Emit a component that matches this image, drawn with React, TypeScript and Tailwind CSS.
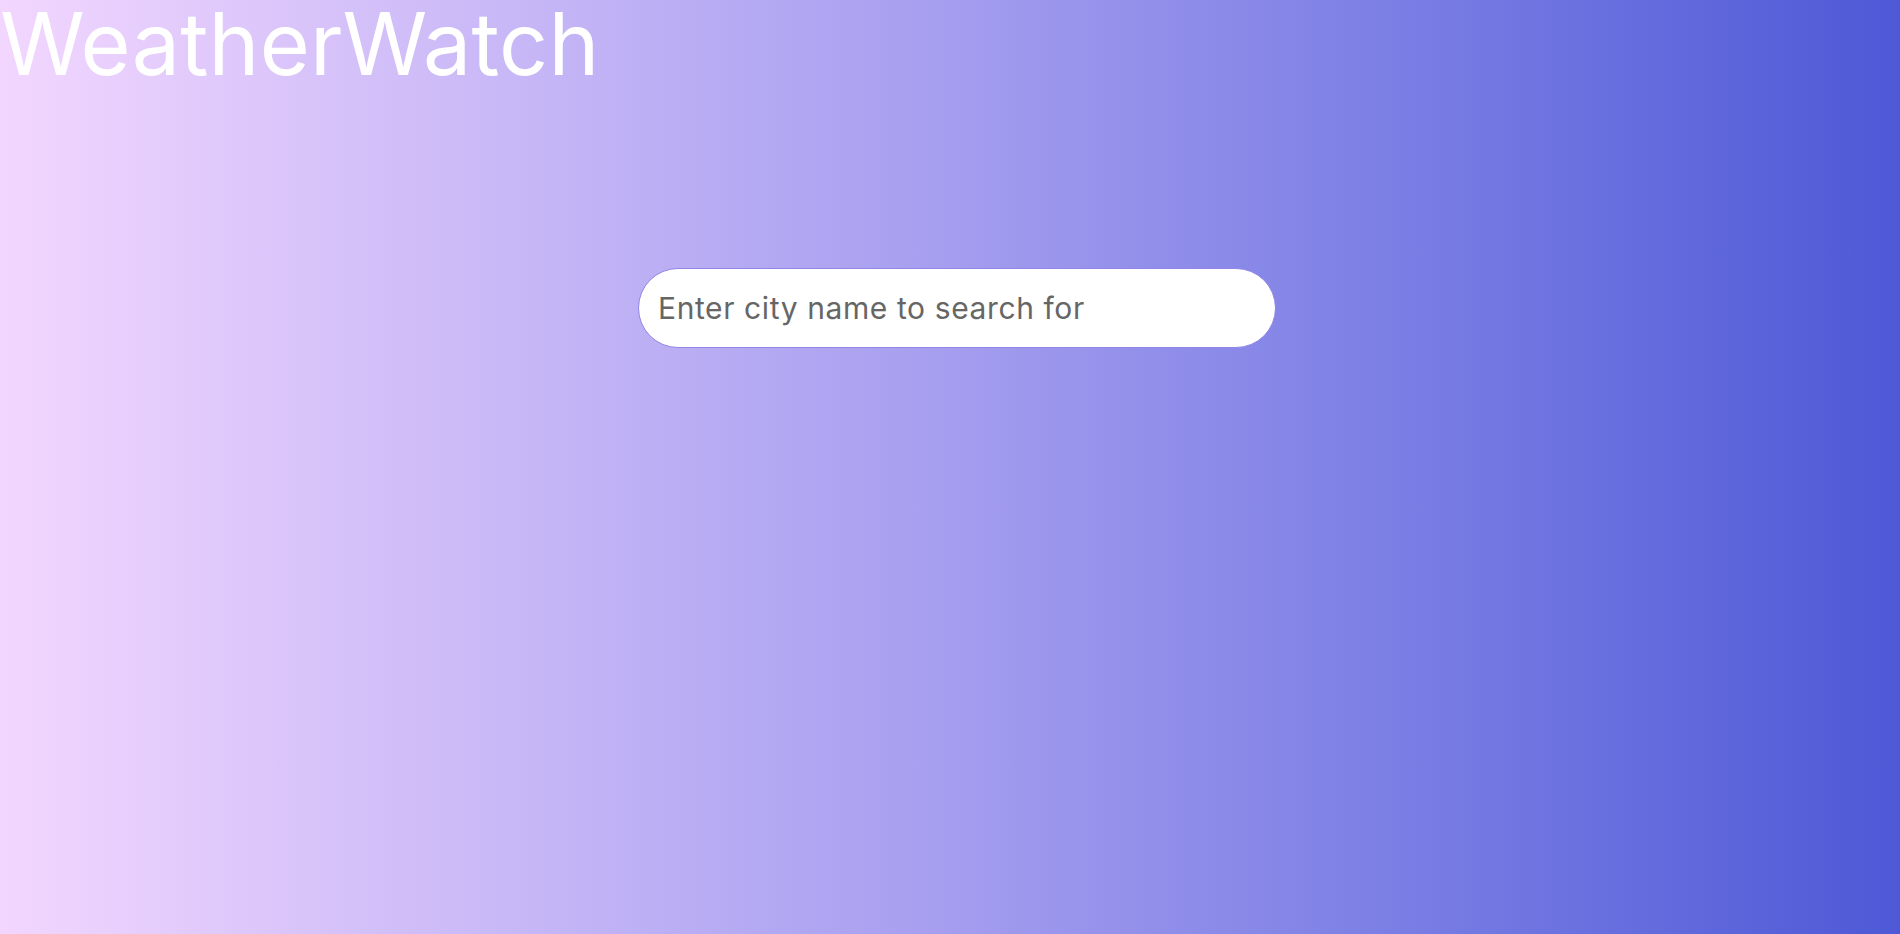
export default function App() {
  return (
    <div className="min-h-screen w-full bg-gradient-to-r from-[#f2d6fe] via-[#a59def] to-[#4f58d6] font-['Inter',sans-serif]">
      <h1 className="m-0 text-[86px] leading-[88px] font-normal text-white tracking-[0.2px]">
        WeatherWatch
      </h1>
      <div className="flex justify-center pl-[14px] mt-[180px]">
        <input
          type="text"
          placeholder="Enter city name to search for"
          className="w-[638px] h-[80px] rounded-full bg-white border border-[#8f86e6] px-[19px] text-[30px] tracking-[0.6px] text-[#555] placeholder:text-[#666] outline-none font-['Inter',sans-serif]"
        />
      </div>
    </div>
  );
}
